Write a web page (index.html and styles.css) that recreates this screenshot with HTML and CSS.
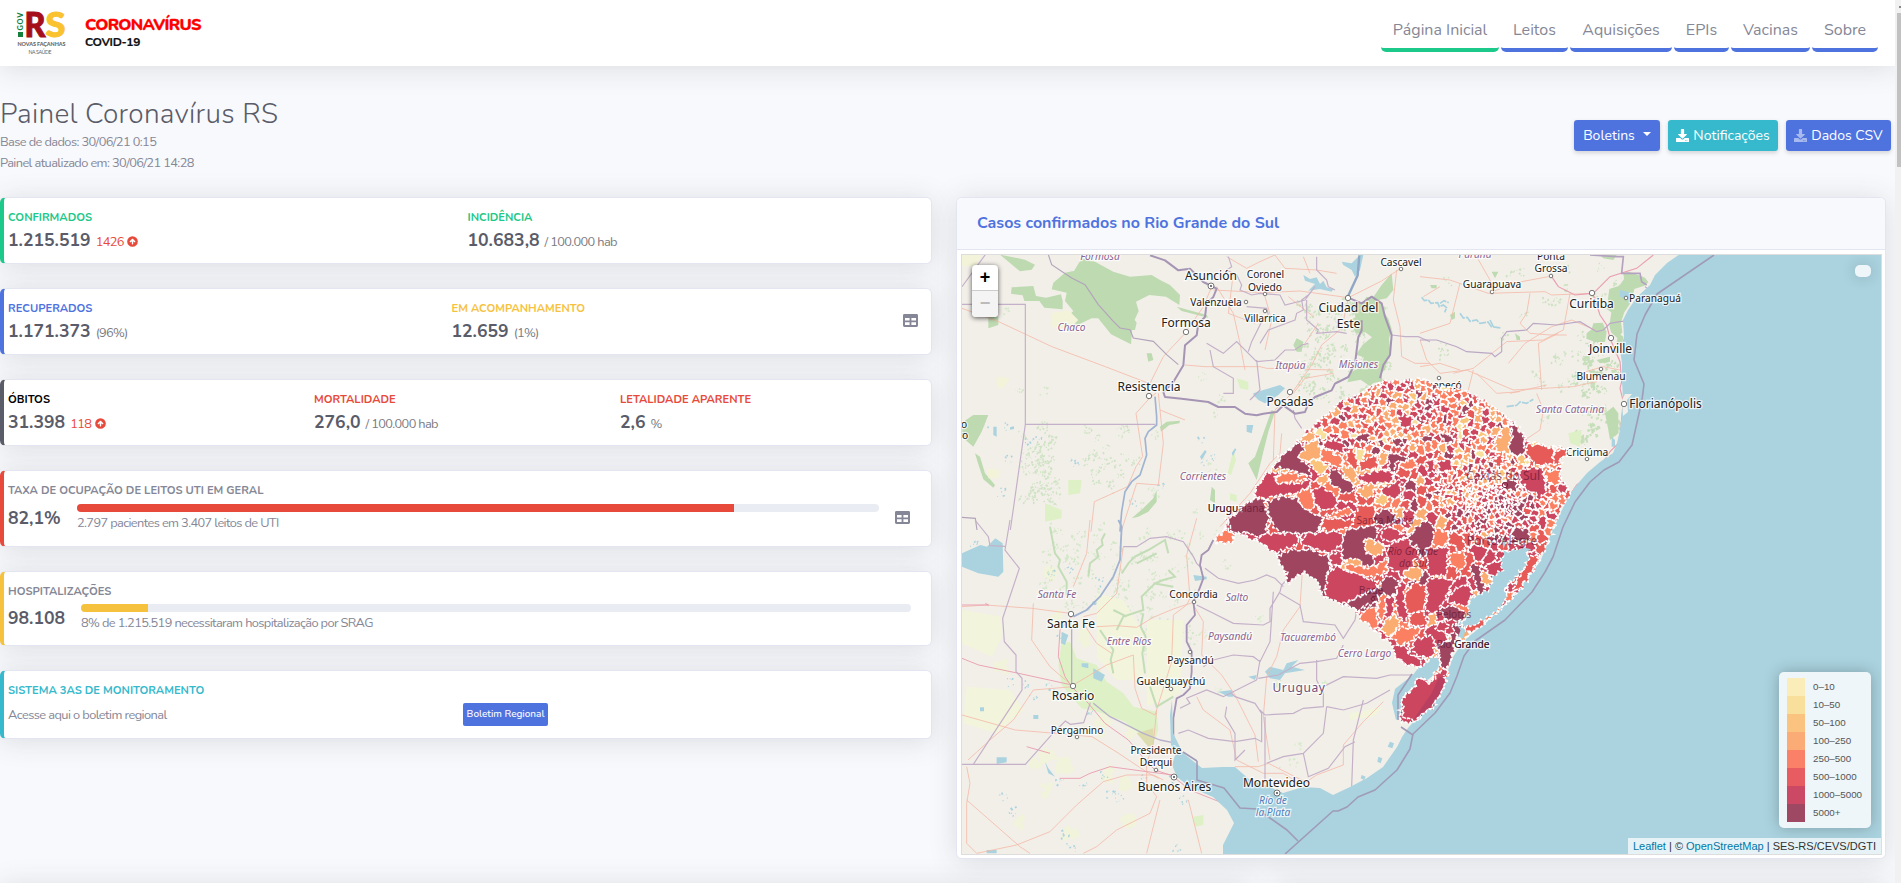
FILE: index.html
```html
<!DOCTYPE html>
<html lang="pt-BR">
<head>
<meta charset="utf-8">
<title>Painel Coronavírus RS</title>
<link rel="stylesheet" href="styles.css">
</head>
<body>
<svg width="0" height="0" class="defs">
  <symbol id="up" viewBox="0 0 512 512"><path fill="currentColor" fill-rule="evenodd" d="M256 8a248 248 0 1 0 0 496a248 248 0 1 0 0-496zM143 289l-15-15c-9-9-9-24 0-33l111-111c9-9 24-9 34 0l111 111c9 9 9 24 0 33l-15 15c-10 9-25 9-35 0l-46-49v136c0 13-11 24-24 24h-16c-13 0-24-11-24-24V240l-46 49c-10 10-25 10-35 0z"/></symbol>
  <symbol id="table" viewBox="0 0 15 13"><path fill="currentColor" fill-rule="evenodd" d="M1.4 0h12.2A1.4 1.4 0 0 1 15 1.4v10.2a1.4 1.4 0 0 1-1.4 1.4H1.4A1.4 1.4 0 0 1 0 11.600V1.400A1.400 1.400 0 0 1 1.400 0zM2 4v2.400h4.600V4zM8.400 4v2.400H13V4zM2 8.300v2.600h4.600V8.300zM8.400 8.300v2.600H13V8.300z"/></symbol>
  <symbol id="down" viewBox="0 0 512 512"><path fill="currentColor" fill-rule="evenodd" d="M216 0h80c13 0 24 11 24 24v168h88c18 0 27 21 14 34L269 378c-7 7-19 7-26 0L90 226c-13-13-4-34 14-34h88V24c0-13 11-24 24-24zm296 376v112c0 13-11 24-24 24H24c-13 0-24-11-24-24V376c0-13 11-24 24-24h147l49 49c20 20 52 20 72 0l49-49h147c13 0 24 11 24 24zm-124 88c0-11-9-20-20-20s-20 9-20 20 9 20 20 20 20-9 20-20zm64 0c0-11-9-20-20-20s-20 9-20 20 9 20 20 20 20-9 20-20z"/></symbol>
</svg>
<div class="viewport">
<div class="page">
  <header class="topbar">
    <div class="brand">
      <svg class="rs-logo" width="50" height="46" viewBox="0 0 50 46">
        <text class="gov" transform="translate(6 20.500) rotate(-90)" textLength="18">GOV</text>
        <rect x="1" y="22" width="5" height="5" fill="#15803c"/>
        <text class="rs" x="7.500" y="27" fill="#a50f1c" stroke="#a50f1c" textLength="21" lengthAdjust="spacingAndGlyphs">R</text>
        <text class="rs" x="28.500" y="27" fill="#f9c22e" stroke="#f9c22e" textLength="20" lengthAdjust="spacingAndGlyphs">S</text>
        <text class="tag" x="0.500" y="36" textLength="48">NOVAS FAÇANHAS</text>
        <text class="tag thin" x="11.500" y="43.500" textLength="23">NA SAÚDE</text>
      </svg>
      <div class="brand-text"><b>CORONAVÍRUS</b><span>COVID-19</span></div>
    </div>
    <nav class="menu">
      <a class="w1 active">Página Inicial</a><a class="w2">Leitos</a><a class="w3">Aquisições</a><a class="w4">EPIs</a><a class="w5">Vacinas</a><a class="w6">Sobre</a>
    </nav>
  </header>

  <section class="heading">
    <div class="heading-text">
      <h1>Painel Coronavírus RS</h1>
      <p>Base de dados: 30/06/21 0:15</p>
      <p>Painel atualizado em: 30/06/21 14:28</p>
    </div>
    <div class="actions">
      <a class="btn b1">Boletins<i class="caret"></i></a>
      <a class="btn b2"><svg width="13" height="13"><use href="#down"/></svg>Notificações</a>
      <a class="btn b3"><svg width="13" height="13" class="dim"><use href="#down"/></svg>Dados CSV</a>
    </div>
  </section>

  <main class="columns">
    <div class="stats">
      <article class="card stat green">
        <div class="cell c-half"><h6 class="t-green">Confirmados</h6><p><b>1.215.519</b><small class="t-red">1426 <svg width="11" height="11"><use href="#up"/></svg></small></p></div>
        <div class="cell"><h6 class="t-green">Incidência</h6><p><b>10.683,8</b><small>/ 100.000 hab</small></p></div>
      </article>
      <article class="card stat blue">
        <div class="cell c-mid"><h6 class="t-blue">Recuperados</h6><p><b>1.171.373</b><small>(96%)</small></p></div>
        <div class="cell grow"><h6 class="t-yellow">Em acompanhamento</h6><p><b>12.659</b><small>(1%)</small></p></div>
        <svg class="table-ico" width="15" height="13"><use href="#table"/></svg>
      </article>
      <article class="card stat dark">
        <div class="cell c-third"><h6 class="t-black">Óbitos</h6><p><b>31.398</b><small class="t-red">118 <svg width="11" height="11"><use href="#up"/></svg></small></p></div>
        <div class="cell c-third"><h6 class="t-red">Mortalidade</h6><p><b>276,0</b><small>/ 100.000 hab</small></p></div>
        <div class="cell"><h6 class="t-red">Letalidade aparente</h6><p><b>2,6</b><small>%</small></p></div>
      </article>
      <article class="card gauge red">
        <h6>Taxa de ocupação de leitos UTI em geral</h6>
        <div class="gauge-row">
          <b class="g1">82,1%</b>
          <div class="meter m1"><div class="track"><i class="fill-red" style="width:81.9%"></i></div><span>2.797 pacientes em 3.407 leitos de UTI</span></div>
          <svg class="table-ico2" width="15" height="13"><use href="#table"/></svg>
        </div>
      </article>
      <article class="card gauge yellow">
        <h6>Hospitalizações</h6>
        <div class="gauge-row">
          <b class="g2">98.108</b>
          <div class="meter m2"><div class="track"><i class="fill-yellow" style="width:8.1%"></i></div><span>8% de 1.215.519 necessitaram hospitalização por SRAG</span></div>
        </div>
      </article>
      <article class="card gauge cyan">
        <h6 class="t-cyan">Sistema 3As de Monitoramento</h6>
        <div class="report"><span>Acesse aqui o boletim regional</span><a class="mini">Boletim Regional</a></div>
      </article>
    </div>

    <article class="card map-card">
      <h2>Casos confirmados no Rio Grande do Sul</h2>
      <div class="map">
<svg class="tiles" viewBox="962 255 919 599" width="919" height="599">
  <rect x="962" y="255" width="919" height="599" fill="#f2efe9"/>
  <g id="specks"></g>
  <!-- north-west -->
  <g transform="translate(950 190) scale(.33333)">
    <g fill="#bddab1">
      <path d="M150 194l75 15 30 15-10 15-35 5-30-25zM345 248l25-5 20 20 35 5 10 35 30 0 20 40 60 35 15 20-5 22-50 0-30-35-50 0-60 28-15-30 20-20-25-30 5-25-45-10 5-20zM395 205l40 10 55 30 50 15 65-5 25 15 30 15 30 30-2 30-40-25-50-5-40 20 8 28-18 40-5 60-60-30-60-75-20-60-30-20-10-20zM185 292l65-4 8 30 30 5 45-10 5 20 0 25-55-5-15-20-45 0-5-17-35-5zM115 380l30 0 0 25-30 10zM1325 250l5 50-20 25-50 10 35-50zM1200 345l20-12 18 5 12-18 24 8 18 6 8 30 15 22 10 30-8 30 4 40-10 25-5 28-12 10 4 25-28 5-10 10-28-20-40 8 10-30 30-15 10-30-24-8 20-30 28-22-20-15-28 4-20-40 20-10z"/>
      <path d="M70 675l45 0-20 50-25 45-35-30 5-45zM1040 445l20 10-5 30-15 0-10-20zM590 490l15 0 5 20-15 5zM965 660l10 5-20 60-15 60-20 85-25-50 20-20 25-70zM630 710l20-15 40-3-2 8-30 5-25 20zM75 790l15 10 15 50 30 35-5 8-30-25-15-45zM785 890l10 10 0 40-15-10z"/>
      <path d="M620 900l0 35-25 30-30 15-20 5 35-30 30-30zM900 950l15 0 5 40-30 15zM680 350l90 25 5 8-80-20z"/>
    </g>
    <g fill="#def0c5"><path d="M860 565l35 10 0 25-25-5zM850 780l8 30-15 45-10-5zM355 870l40 0-5 40-35 5zM285 940l50 20 0 25-50 10zM840 910l20 5 0 20-20-5z"/></g>
    <g fill="#f2f3d9"><path d="M36 194l60 0-20 35-40 0zM305 370l50-10 30 30-30 30-50-10zM110 835l40 5-5 25-30 0zM140 560l40 5-20 30-20-5z"/></g>
    <g fill="#aad3df"><path d="M910 610l30-10 50-15 15 10-20 20-40 25-20-10-15-15zM1060 255l20 12 20-5 10 20 10-10 10 20 20 5-5 8-35-8-35 5 20-20-30-10zM1175 215l30 5 25-25 10 0-10 45-15 20-10-20-25-15zM890 705l20 0-5 25-15-5zM130 710l10 0 0 30-10-5zM750 800l15-20 5 5-15 25zM845 790l10-15 4 3-10 20zM180 712l12-3 0 8-12 2z"/></g>
    <g fill="none" stroke="#f4baaa" stroke-width="2.500">
      <path d="M36 355l110 40 160 75 160 60 130 50M618 610l-15 10-45 50 20 130-20 30-25 60-100 45-10 90M625 610l15 150-15 125-65-5-45 140M600 580l40-80 65-70 55-80 25-60M705 525l60 5 165 0 20 5 200 5M790 300l150 8 110-5 145 20 100-50 60-40M800 290l50 80 20 90 15 80M1195 325l-20 90-60 50-30 60-60 85-50 50-5 150M830 200l60 35 40-20 45-20 30 40 95 5 60 10M945 320l20 70-20 90M1340 240l-10 90 20 80 5 90 40 20 45 0M995 730l-5 60-30 30-60 90-90 100M1030 610l35-45 85-15M630 660l75 30M1105 400l-40 60M850 250l-15 120 80 30M1015 320l75 60M1060 200l20 50"/>
    </g>
    <g fill="none" stroke="#c4b0c8" stroke-width="3.500">
      <path d="M36 343h190v360h390M226 703l-45 317M36 290l70-96"/>
      <path d="M295 194l10 30 60 40 40 20 40 60 45 50 20 20 30 5 10 25 60 10 40 40 35 30M36 982l40 3 5 35" stroke="#b3a4bb"/>
      <path d="M835 200l10 30-15 10 30 15 15 30-5 15 35 15 25-5 60 5 15 30 60-15 30-40-20 25-20 15 5 30-20 10-5 20-80 30-25 40M895 485l10-30 30-60 20-20-5-20-60-5M770 460l50 30 40-35 30 30 30 30 55-5 30-30 30 0 20-15 20-5M1100 200l0 40 30 30 5 20 20 10M1070 330l0 60 35 30-5 10 60-5 30 5M920 510l10 90-30 30M1030 660l5 25 20 30M780 480l10 50 60 35 0 45-30 0M1325 435l40 5 40 0 35 15"/>
    </g>
    <g fill="none" stroke="#a594b4" stroke-width="6" stroke-linejoin="round">
      <path d="M600 196l45 15 40 30 35-5 40 40 40 20-10 25-20 20-5 40-20 20-5 35-35 30-5 60-30 50-30 30 5 15 50 5 80 10 30 15 50 0 30 20 35 5 20-5 40-5 20-20 35 25 30-5 10-25 20-20 50-20 10-20 40-20 20-40 10-80 10-20 0-30"/><path d="M1200 325l35 15 30-20 30 20 10 40 20 55-5 60-20 30-10 40" />
      <path d="M615 620l5 60 0 25-25 20-10 20 5 50-20 60-25 20-20 30-10 60-5 60" stroke-width="5" stroke="#a0b3d0"/>
    </g>
    <path d="M1228 196l-5 60-30 65" fill="none" stroke="#8fa7c4" stroke-width="7"/>
  </g>
  <!-- south-west -->
  <g transform="translate(950 520) scale(.33333)">
    <g fill="#def0c5"><path d="M335 370l25-5 20 50 60 20 30 50 50 35 30 40 70 15 5 55-10 30-30-5-60-50-80-30-50-10-60-70-10-60z"/><path d="M730 890l30-5 0 30-25 5z"/></g>
    <path d="M560 640l50-15 0 50-15 5z" fill="#dcdcae"/>
    <g fill="#f3f4dc"><path d="M36 270l120 20 0 60-30 60-90-40zM440 220l80 20 60 100 0 140-80 0-60-70zM50 500l130 10 40 60-80 70-100-30zM590 300l110 0-10 220-100 40zM1200 580l100-20-30 30-70 10z"/></g>
    <g fill="none" stroke="#c3ddb7" stroke-width="6">
      <path d="M465 40l-10 20 3 15-18 15 5 20-25 20-5 40M300 20l15 80 15 20-5 20 25 45 0 40M515 160l20-30 20-20 40-20 50-30 10 40M655 150l20 20-35 10-25 10-25 25-15 15 5 40-60 20-20 40M580 280l-8 40 15 30-10 50 8 60M610 190l60 10M560 130l60-30M450 330l40 60-8 30 8 40M600 500l20 60 50-30M530 290l-40-20"/>
    </g>
    <g fill="#aad3df"><path d="M36 100l55-25 20 5 25-25 22 15 2 85-15 15-60-10-49-20zM945 455l15-15 40 10 10-20 35-10-20 20 40 10-60 10-15 20-30-5zM805 515l40-5 5 20-15 0zM895 470l25-5-5 15zM430 445l35 20-10 20-25-10zM395 430l20 0 0 15-20-5zM335 335l20 10-10 30-12-5zM140 712l30 0 0 15-30 5zM285 725l10 20 20 25-20-10zM110 990l30 0 0 10-30 0zM1320 665l12 5-5 15-14-5zM1285 710l12 5-5 15-10-5zM1235 765l12 5-5 10-10-5zM90 562l12 0 0 12-12 0zM250 585l15 0 0 12-15 0zM730 165l40 5 0 8-35 5z"/></g>
    <g fill="none" stroke="#f4baaa" stroke-width="2.500">
      <path d="M36 260l70-5 140 10 115 15M250 250l-5 110 55 80 70 60-120 10-60 90-70 60-66 60M36 585l160 45 120 10 110 10 80 50 90 60 30 15M370 495l100-60 80-30 5 100 20 60 40 20 50-160 5-140 40-30 10-20-10-130 30-110M370 200l40-100 10-100M440 320l60-3 60 5 50-30 60-25 60-20M400 310l40 60 45 30M520 80l-20 140-60 60-40 10M730 255l30 50-5 100 60 60 40 60 30 60 30 60 10 80M740 530l20 40 80 60 20 90 40 20 40 20 60 0 40 25M1060 110l-10 150-50 70-20 80-30 60-10 120 20 130M1300 545l-60 60-60 70 0 60-80 30-30 20M50 740l10 50-10 60 0 120 30 30M50 840l160 140 30 20M80 1000l120-25 100-40 80-80 80-70 70-20 80 0 30 15M620 570l-10 100-20 60 0 60 30 40-20 50-100 50-60 50-40 20M630 840l-20 80-20 80M715 840l20 80 20 80M855 740l70 0 30-10 40 20 80 40"/>
    </g>
    <path d="M36 415l50 20 120 25 160 35M365 290l-35 40-5 80 20 60 20 30 50 50 50 60 70 50 50 60 30 30 60 20M36 255l80 0-10-5M230 680l70 20M330 775l60 0 30-15 60-20 110 15 80 10M670 770l50 40 100 40" fill="none" stroke="#ea9eb0" stroke-width="2.800"/>
    <g fill="none" stroke="#c4b0c8" stroke-width="3.500">
      <path d="M180 0l-15 90 43 55-50 150 5 70 35 40 0 50 18 20 0 35L70 733M36 733h190l80-90 40-40 15 10 40-5 20-60M75 0l40 50 5 27 45 2"/>
      <path d="M520 80l40 0 40-25 50-5 50 15 20 30 10 15 10 20 15 15M765 145l40 30 60 15 50-10 35-15 25 10 25 25M740 255l50 25 60 30 90 5 20-10 0-40 30-50 5-20 15-15M990 220l60 35 10 50 95 10 25 40 35-55 5-30M760 440l30-20 60-15 60 5 20 15 30-60 10-150M930 420l-10 60M925 475l60-10 65-35 50-5 60-10 20-40M690 565l30-15-10-15 60-25 50 20 80-40 20-10M685 640l30-10 60 25 80 10 60-10 20 10 0-85-20-30-60-20-10-10M830 560l-5 30 30 50 0 80 30-30M930 570l15 15 85-5 30-15 60-5 0-60 60-30 100 5 40-10 70 0M945 590l0 200M1130 560l50 10 70-20 70-40M1130 560l-10 80-60 60-60 10-50 20M1060 700l15 70 60-25 50-65 30-15M1205 800l5-140 30-120M1100 420l0 60 15 30"/>
    </g>
    <g fill="none" stroke="#a594b4" stroke-width="5.500" stroke-linejoin="round">
      <path d="M790 60l-15 30-20 15-5 30 10 40-15 40-15 30 5 40-25 30 0 50 15 30 0 60-5 50-20 20-20 10-10 60 0 70 15 30 50 50 5 45"/>
      <path d="M505 0l10 20-5 100-20 50-40 60-40 40-40 20" stroke="#a0b3d0"/>
      <path d="M365 320l0 180M430 550l50 40 60 30 40 20 50 20 50 10" stroke="#b7b0c8" stroke-width="4"/>
    </g>
  </g>
  <!-- north-east -->
  <g transform="translate(1420 240) scale(.33333)">
    <path d="M610 100l15-5 30 10 20 8 10 14-12 10-30 10-10 40-20 30-10 30 4 30-14 18-20-18-5-20 6-40-14-10 8-60 30-10 14-20zM500 280l15-12 5-18 28-2 12 28-5 30-30 0-26-10zM595 280l15 10-5 30-15-15zM555 520l25-20 15 20 0 60-25 20-5-30zM505 390l50 10 0 10-40 0zM530 360l40-10 0 15-30 5zM215 95l20 0-10 20zM30 135l20 0 0 10-15 0zM90 225l15-10 0 20-10 5zM285 280l15 10 0 10-10 0zM540 45l50 0-10 15-30-5z" fill="#bddab1"/>
    <path d="M445 580l40-10-5 50-30-10z" fill="#def0c5"/>
    <g fill="none" stroke="#aad3df" stroke-width="5"><path d="M5 172l8 10 12-2 8 10 20-2 5 12 12-5 10 8-6 14M60 190l12-8 14 6M120 220l10 14 12-2 8 12 20-4 10 10 24-4 10 14 30 4M210 240l10 20M260 500l30-4 10-10 20 4 20-12" stroke-dasharray="22 3"/></g>
    <path d="M600 150l40 10-10 20-30-10zM575 590l10 10 0 20-10 0z" fill="#aad3df"/>
    <g fill="none" stroke="#f4baaa" stroke-width="2.500">
      <path d="M0 110l90 10 115 40 170-5 20 10 120-5M170 50l40 70 15 35M215 155l90-30 80-15M450 160l-20 110-60 30-110 5-100 80-60 15M330 160l-10 60-20 30 30 30 60 5 50 0M525 270l-70-30-60 20-80 50-50 60M0 300l20 60 40 40 80-10 140 60 180-10 70-15M0 380l60-10 60 20M160 390l-15 60M170 400l60 60 70-5M365 450l-10-140 60-30M350 460l20 50-10 60-60 40M270 460l110-25M10 170l50-30M120 130l-30 120-90 30M600 390l-50-10-70 20"/>
    </g>
    <path d="M700 45l-50 40-80 25-50 50M395 110l20 30 50 25 50-5M520 165l20 60 20 30 10 40 30 70 5 60-5 20 10 40-5 50-5 70-30 30-40 60-60 40-40 60" fill="none" stroke="#ea9eb0" stroke-width="3.500"/>
    <path d="M0 300l50 0 60 20 30 15 75 5 10 10 20-15 0-40 15-20 60-5 20-20 70 5 70-10 50 30 20-5 20-20 30-5 45-5 75 25M455 760l25 12M675 140l30 25" fill="none" stroke="#bba8c5" stroke-width="3.500"/>
    <path d="M510 45l80 5 20 0-5 50 40 0 15 0 5 25 15 10" fill="none" stroke="#b5a2c0" stroke-width="5"/>
  </g>
  <!-- ocean, estuary and border lagoon -->
  <path fill="#aad3df" d="M1680 254L1667 263L1655 275L1650 285L1637 297L1628 310L1623 320L1624 337L1620 350L1622 363L1622 380L1623 400L1622 413L1620 430L1617 443L1613 453L1600 462L1587 473L1575 487L1568 497L1562 510L1553 527L1548 543L1540 562L1528 577L1517 593L1500 610L1483 625L1467 638L1461 645L1453 657L1447 673L1440 693L1430 707L1420 715L1408 728L1402 737L1397 747L1383 767L1367 778L1350 787L1333 795L1320 788L1303 787L1283 793L1270 787L1250 780L1235 767L1223 767L1202 768L1193 761L1183 753L1178 743L1173 733L1172 700L1170 715L1171 745L1176 752L1172 765L1177 777L1190 787L1213 797L1227 810L1234 823L1227 837L1223 845L1223 854L1881 854L1881 255Z"/>
  <path fill="#aad3df" d="M1413 675L1424 660L1432 655L1440 659L1438 672L1422 684L1415 685L1404 695L1402 715L1396 720L1392 703L1395 689L1405 681Z"/>
  <path d="M1622 400l3-6 7 0-5 6 1 12-5 4z" fill="#f2efe9"/>
  <g fill="none" stroke="#9f9bb8" stroke-width="1.600" stroke-linejoin="round">
    <path d="M1714 255L1657 294L1645 315L1637 334L1634 360L1644 384L1642 400L1632 445L1619 462L1604 470L1590 482L1575 502L1563 527L1553 557L1545 572L1532 592L1505 620L1475 641L1464 656L1457 676L1450 693L1435 713L1413 734L1410 749L1397 770L1375 790L1358 797L1347 807L1338 811L1333 811L1285 854"/>
    <path d="M1197 761L1197 780L1224 788L1240 808L1257 809L1287 830L1298 841M1197 761L1183 752M1401 727L1413 735M1412 674L1398 695L1398 720"/>
  </g>
  <g id="labels"></g>
  <!-- municipalities -->
  <g id="cells" transform="translate(1200 370) scale(.33333)"></g>
  <g id="covered"></g>
</svg>
        <div class="zoom"><span>+</span><span class="off">−</span></div>
        <div class="info"></div>
        <div class="legend">
          <div><i class="l1"></i>0–10</div><div><i class="l2"></i>10–50</div><div><i class="l3"></i>50–100</div><div><i class="l4"></i>100–250</div>
          <div><i class="l5"></i>250–500</div><div><i class="l6"></i>500–1000</div><div><i class="l7"></i>1000–5000</div><div><i class="l8"></i>5000+</div>
        </div>
        <div class="attribution"><a>Leaflet</a> | © <a>OpenStreetMap</a> | SES-RS/CEVS/DGTI</div>
      </div>
    </article>
  </main>
  <div class="next-row"><div class="card n1"></div><div class="card n2"></div></div>
</div>
<div class="scrollbar"><i class="arrow"></i><i class="thumb"></i></div>
</div>
<script src="map.js"></script>
</body>
</html>
```
FILE: styles.css
```css
*{box-sizing:border-box}
body{margin:0;background:#f8f9fc;color:#858796;font-family:Nunito,Lato,"Open Sans",sans-serif;font-size:16px;line-height:1.5}
h1,h2,h6,p{margin:0}
.defs{position:absolute}
.viewport{display:flex;width:1901px;height:883px;overflow:hidden}
.page{width:1895px;height:883px;overflow:hidden}
.topbar{display:flex;justify-content:space-between;height:66px;background:#fff;box-shadow:0 2.4px 28px rgba(58,59,69,.15)}
.brand{display:flex;padding:10px 0 0 17px}
.rs-logo{overflow:visible}
.rs-logo text{font-family:Lato,sans-serif}
.rs-logo .gov{font-size:7.5px;font-weight:900;fill:#15803c}
.rs-logo .rs{font-size:35px;font-weight:900;stroke-width:1px}
.rs-logo .tag{font-size:5.4px;font-weight:900;fill:#666}
.rs-logo .thin{font-size:5.2px;font-weight:400}
.brand-text{display:flex;flex-direction:column;margin-left:18px;padding-top:5px}
.brand-text b{color:#fe0000;font-size:16.500px;line-height:19px;font-weight:800;letter-spacing:-.7px;-webkit-text-stroke:.3px #fe0000}
.brand-text span{color:#111;font-size:12px;line-height:15px;font-weight:700;margin-top:1px;letter-spacing:-.35px;-webkit-text-stroke:.2px #111}
.menu{display:flex;gap:2px;padding:12px 17px 0 0}
.menu a{height:40px;border-bottom:4px solid #4e73df;border-radius:5px;text-align:center;line-height:37px}
.menu .active{border-color:#1cc88a}
.w1{width:118px}.w2{width:67px}.w3{width:102px}.w4{width:55px}.w5{width:79px}.w6{width:66px}
.heading{display:flex;justify-content:space-between;height:131px}
.heading-text{padding-top:31px}
h1{font-size:28px;line-height:35px;font-weight:300;color:#5a5c69;letter-spacing:.27px}
.heading p{font-size:12.8px;line-height:21px;letter-spacing:-.6px}
.actions{display:flex;gap:8px;padding:54px 4px 0 0}
.btn{display:flex;align-items:center;justify-content:center;height:31px;border-radius:3.2px;background:#4e73df;color:#fff;font-size:14px;box-shadow:0 2px 4px rgba(58,59,69,.2)}
.btn svg{margin-right:4px}
.dim{opacity:.5}
.b1{width:86px}.b2{width:110px;background:#36b9cc}.b3{width:105px}
.caret{border:4.200px solid transparent;border-top-color:#fff;border-bottom:0;margin-left:8px;margin-top:-3px}
.columns{display:flex;gap:24px;height:662px}
.stats{display:flex;flex-direction:column;gap:24px;width:932px}
.card{background:#fff;border:1px solid #e3e6f0;border-radius:5.600px;box-shadow:0 2.4px 28px rgba(58,59,69,.15)}
.stat,.gauge{border-left-width:4px}
.stat{display:flex;height:67px;padding:11px 0 0 4px;flex-shrink:0}
.green{border-left-color:#1cc88a}.blue{border-left-color:#4e73df}.dark{border-left-color:#5a5c69}
.red{border-left-color:#e74a3b;height:77px}.yellow{border-left-color:#f6c23e;height:75px}.cyan{border-left-color:#36b9cc;height:69px}
h6{font-size:11.200px;line-height:17px;font-weight:700;text-transform:uppercase;color:#858796}
.cell p{display:flex;align-items:baseline;line-height:26px;margin-top:1px;color:#5a5c69}
.cell b,.gauge b{font-size:17.600px;font-weight:700;color:#5a5c69}
small{font-size:12.800px;margin-left:5px;color:#7a7b82;letter-spacing:-.65px}
small svg{vertical-align:-1px;margin-left:1px}
.c-half{width:459.500px}.c-mid{width:443.500px}.c-third{width:306px}.grow{flex:1}
.t-green{color:#1cc88a}.t-blue{color:#4e73df}.t-yellow{color:#f6c23e}.t-red{color:#e74a3b}.t-black{color:#000}.t-cyan{color:#36b9cc}
.table-ico{margin:14px 13px 0 0}
.gauge{padding:11px 0 0 4px;flex-shrink:0}
.gauge-row{display:flex;padding-top:5px}
.gauge-row b{line-height:28px}
.g1{width:69px}.g2{width:73px;margin-top:-1px}
.meter span{display:block;font-size:12.800px;line-height:18px;margin-top:2px;white-space:nowrap;letter-spacing:-.62px}
.m1{width:802px}.m2{width:830px;margin-top:-1px}
.track{height:8px;border-radius:4px;background:#eaecf4;overflow:hidden}
.track i{display:block;height:8px}
.fill-red{background:#e74a3b}.fill-yellow{background:#f6c23e}
.table-ico2{margin:7px 0 0 16px}
.report{display:flex;padding-top:4px;font-size:12.800px;line-height:22px}
.report span{width:455px;padding-top:1px;letter-spacing:-.58px}
.mini{width:85px;height:23px;background:#4e73df;color:#fff;border-radius:2px;font-size:10px;line-height:22px;text-align:center;font-weight:500}
.map-card{width:930px;height:662px;padding:0 4px}
h2{margin:0 -4px;height:52px;padding:0 20px;line-height:51px;background:#f8f9fc;border-bottom:1px solid #e3e6f0;border-radius:5px 5px 0 0;font-size:16px;font-weight:700;color:#4e73df}
.map{position:relative;width:921px;height:601px;margin-top:4px;border:1px solid #ddd;overflow:hidden}
.tiles{display:block}
.zoom{position:absolute;left:10px;top:10px;width:26px;height:52px;border-radius:4px;overflow:hidden;background:#fff;box-shadow:0 1px 5px rgba(0,0,0,.65);font:bold 18px/25px "Liberation Sans",Arial,sans-serif;color:#000;text-align:center}
.zoom span{display:block;height:26px;border-bottom:1px solid #ccc}
.zoom .off{background:#f4f4f4;color:#bbb;border:0}
.info{position:absolute;right:10px;top:10px;width:16px;height:12px;border-radius:5px;background:rgba(255,255,255,.8);box-shadow:0 0 15px rgba(0,0,0,.2)}
.legend{position:absolute;right:10px;bottom:26px;width:92px;height:156px;padding:6px 8px;border-radius:5px;background:rgba(255,255,255,.8);box-shadow:0 0 15px rgba(0,0,0,.25);font:9.8px/18px "Liberation Sans",Arial,sans-serif;color:#555;white-space:nowrap}
.legend div{display:flex;height:18px}
.legend i{width:18px;height:18px;margin-right:8px;flex-shrink:0}
.l1{background:#faedb9}.l2{background:#f8df9b}.l3{background:#fac480}.l4{background:#faab76}.l5{background:#fa8068}.l6{background:#e75c60}.l7{background:#cc4965}.l8{background:#9e4863}
.attribution{position:absolute;right:0;bottom:0;height:16px;padding:0 5px;background:rgba(255,255,255,.7);font:11px/16px "Liberation Sans",Arial,sans-serif;color:#333;white-space:nowrap}
.attribution a{color:#0078a8}
.next-row{display:flex;gap:24px;padding-top:24px}
.next-row .card{height:40px;flex-shrink:0}
.n1{width:1250px}.n2{width:612px}
.scrollbar{width:6px;height:883px;background:#f1f1f1}
.arrow{display:block;width:2px;height:2px;background:#888;margin:6px 0 5px 4px}
.thumb{display:block;height:154px;margin-left:2px;background:#c1c1c1}
.city{font-family:"Noto Sans",sans-serif;fill:#222;stroke:#fff;stroke-opacity:.75;stroke-width:2.400px;paint-order:stroke;text-anchor:middle}
.region{fill:#8a6591;font-style:italic}
.country{fill:#6e4f7a;letter-spacing:.6px}
.water{fill:#4f80bd;font-style:italic}
.under{fill:#5a1230;stroke:none;opacity:.62}
```
FILE: map.js
```js
(function () {
  var NS = 'http://www.w3.org/2000/svg', seed = 7;
  function rnd() { seed = (seed * 16807) % 2147483647; return seed / 2147483647; }
  function add(parent, tag, attrs, text) {
    var e = document.createElementNS(NS, tag);
    for (var k in attrs) e.setAttribute(k, attrs[k]);
    if (text) e.textContent = text;
    parent.appendChild(e);
    return e;
  }

  // vegetation and small lakes: x, y, w, h, count, colour, size; points gather in clusters
  var specks = document.getElementById('specks');
  [[1022,425,35,80,330,'#cfe3c4',1.3],[1085,425,55,65,170,'#cfe3c4',1.3],[1140,420,90,150,70,'#d6e9ca',1.5],
   [1300,300,90,110,650,'#cde2c1',1.6],[1110,530,90,130,380,'#d3e7c8',1.4],[965,560,170,280,120,'#f1f3da',6],
   [1440,260,180,170,210,'#cde2c1',1.5],[1575,340,42,100,260,'#c6dfba',2],[965,260,420,220,70,'#d3e7c8',1.4],
   [1040,520,60,90,200,'#d3e7c8',1.4],
   [970,400,170,150,60,'#aad3df',1.3],[980,770,220,80,90,'#aad3df',1.3],[1160,410,120,120,40,'#aad3df',1.2],
   [1040,570,60,120,50,'#aad3df',1.3],[1200,590,180,180,50,'#d6ebca',1.5],[970,640,140,80,30,'#aad3df',1.2]
  ].forEach(function (r) {
    var d = '', cx = 0, cy = 0;
    for (var i = 0; i < r[4]; i++) {
      if (i % 7 === 0) { cx = r[0] + rnd() * r[2]; cy = r[1] + rnd() * r[3]; }
      var x = cx + (rnd() - .5) * 9, y = cy + (rnd() - .5) * 9, s = r[6] * (.4 + rnd());
      d += 'M' + x.toFixed(1) + ' ' + y.toFixed(1) + 'l' + s.toFixed(1) + ' ' + (-s * rnd()).toFixed(1) + 'l' + (s * rnd() * .6).toFixed(1) + ' ' + s.toFixed(1) + 'l' + (-s).toFixed(1) + ' ' + (s * .5).toFixed(1) + 'z';
    }
    add(specks, 'path', { d: d, fill: r[5] });
  });

  // state outline
  var outline = [45,510,75,475,80,450,125,412,160,385,170,350,200,310,218,295,240,260,290,220,340,165,400,120,418,95,470,75,520,45,550,35,610,32,660,26,720,48,780,60,840,85,880,110,930,150,960,175,985,215,1060,230,1108,238,1080,275,1085,330,1110,365,1080,420,1060,480,1040,530,1000,600,960,660,900,720,840,770,800,800,785,812,768,795,760,840,745,895,730,960,700,1010,650,1050,625,1060,600,1052,605,985,640,960,655,922,690,935,720,890,712,860,690,865,660,895,620,885,580,855,575,825,530,785,470,735,465,720,420,700,370,680,355,635,310,605,260,645,255,600,225,550,170,510,110,490,95,515,50,520];
  var poly = [];
  for (var i = 0; i < outline.length; i += 2) poly.push([outline[i], outline[i + 1]]);
  function inside(x, y) {
    var c = false;
    for (var a = 0, b = poly.length - 1; a < poly.length; b = a++) {
      var p = poly[a], q = poly[b];
      if ((p[1] > y) !== (q[1] > y) && x < (q[0] - p[0]) * (y - p[1]) / (q[1] - p[1]) + p[0]) c = !c;
    }
    return c;
  }
  function gap(x, y) {
    var core = Math.hypot((x - 870) / 1.25, y - 375);
    if (core < 75) return 11.5;
    if (core < 130) return 15;
    if (y < 240 && x > 430) return 17.5;
    if (y < 430 && x > 680) return 21;
    if (y < 440 && x > 560) return 30;
    if (y < 250) return 22;
    if (x > 860 && y < 560) return 28;
    return 58;
  }
  var sites = [];
  for (var t = 0; t < 60000; t++) {
    var x = 30 + rnd() * 1090, y = 15 + rnd() * 1050, g = gap(x, y) * (.8 + rnd() * .45), ok = inside(x, y);
    for (var s = 0; ok && s < sites.length; s++)
      if (Math.hypot(sites[s][0] - x, sites[s][1] - y) < Math.min(g, sites[s][2])) ok = false;
    if (ok) sites.push([x, y, g]);
  }
  function warp(p) {
    var x = p[0], y = p[1];
    return (x + 4 * Math.sin(y * .31 + x * .13) + 2.5 * Math.sin(y * .8 + x * .2)).toFixed(1) + ' ' + (y + 4 * Math.sin(x * .29 - y * .11) + 2.5 * Math.sin(x * .77 + y * .25)).toFixed(1);
  }
  function rough(pts) {
    var out = [];
    pts.forEach(function (p, k) {
      var q = pts[(k + 1) % pts.length], n = Math.max(1, Math.round(Math.hypot(q[0] - p[0], q[1] - p[1]) / 7));
      for (var j = 0; j < n; j++) out.push(warp([p[0] + (q[0] - p[0]) * j / n, p[1] + (q[1] - p[1]) * j / n]));
    });
    return 'M' + out.join('L') + 'Z';
  }
  var C = ['#faeebc', '#f8e09c', '#fac57b', '#fbac70', '#fb8062', '#e65a58', '#cc465f', '#9f455f'];
  function pick(x, y) {
    var r = rnd(), core = Math.hypot(x - 930, y - 420) < 90;
    if (core) return C[r < .3 ? 7 : r < .65 ? 6 : r < .85 ? 5 : 4];
    if (y > 420) return C[r < .1 ? 7 : r < .5 ? 6 : r < .72 ? 5 : r < .9 ? 4 : 3];
    return C[r < .06 ? 7 : r < .31 ? 6 : r < .54 ? 5 : r < .79 ? 4 : r < .94 ? 3 : r < .99 ? 2 : 1];
  }
  var root = document.getElementById('cells');
  var clip = add(root, 'clipPath', { id: 'state' });
  add(clip, 'path', { d: rough(poly) });
  var layer = add(root, 'g', { 'clip-path': 'url(#state)' });
  add(layer, 'path', { d: rough(poly), fill: C[6] });
  function cell(parent, d, fill, w) {
    add(parent, 'path', { d: d, fill: fill, stroke: '#fff', 'stroke-width': w || 5, 'stroke-linejoin': 'round', 'stroke-dasharray': '12 3' });
  }
  sites.forEach(function (a) {
    var R = 130, pts = [[a[0] - R, a[1] - R], [a[0] + R, a[1] - R], [a[0] + R, a[1] + R], [a[0] - R, a[1] + R]];
    sites.forEach(function (b) {
      var dx = b[0] - a[0], dy = b[1] - a[1];
      if (a === b || Math.hypot(dx, dy) > 2 * R) return;
      var m = (b[0] * b[0] - a[0] * a[0] + b[1] * b[1] - a[1] * a[1]) / 2, out = [];
      pts.forEach(function (p, k) {
        var q = pts[(k + 1) % pts.length], u = p[0] * dx + p[1] * dy - m, v = q[0] * dx + q[1] * dy - m;
        if (u <= 0) out.push(p);
        if ((u < 0 && v > 0) || (u > 0 && v < 0)) out.push([p[0] + (q[0] - p[0]) * u / (u - v), p[1] + (q[1] - p[1]) * u / (u - v)]);
      });
      pts = out;
    });
    cell(layer, rough(pts), pick(a[0], a[1]));
  });

  // large municipalities: colour index, outline
  [[7,'80 455 125 415 165 382 195 390 205 440 195 500 140 490 100 488'],[7,'205 395 250 378 290 385 330 425 372 440 355 485 300 492 240 490 205 440'],
   [7,'218 295 245 258 285 222 320 230 300 265 325 290 338 320 300 312 250 295'],[6,'160 380 170 345 200 308 235 305 225 335 300 342 330 325 335 345 290 370 210 380 190 388'],
   [4,'228 325 240 305 320 318 325 325 285 335 230 340'],[3,'295 262 325 215 355 210 365 250 355 270 320 272'],[3,'300 200 345 180 345 205 325 215 295 215'],
   [1,'345 175 365 175 385 200 375 208 350 200'],[4,'362 250 370 235 430 262 430 290 400 290 362 270'],[2,'330 270 355 270 385 290 375 310 345 308'],[3,'355 320 385 310 388 330 370 350 355 340'],
   [6,'370 215 405 205 435 230 430 250 380 238'],[7,'388 330 390 293 412 300 440 330 468 352 460 365 430 368 400 350'],[3,'425 285 470 300 468 330 455 343 435 320'],
   [6,'335 360 365 352 410 375 408 415 370 422 340 395'],[4,'282 372 330 350 345 400 330 422 305 408'],[6,'475 318 540 300 580 310 575 335 520 342 480 335'],[5,'480 280 530 250 535 295 485 300'],
   [5,'440 245 455 235 475 290 470 303 445 285'],[3,'540 250 560 248 562 275 538 288'],[7,'565 250 600 250 625 275 590 275 580 310 565 290'],[6,'540 360 605 330 600 378 585 385 545 370'],
   [3,'468 365 495 342 535 345 510 385 485 380'],[2,'520 392 550 372 568 390 545 408'],[7,'467 205 490 190 512 200 505 215 480 212'],[6,'590 140 615 130 640 150 625 178 600 165'],
   [7,'575 208 605 203 608 218 590 225'],[7,'535 205 548 212 548 235 536 225'],[7,'720 190 760 195 762 215 735 218'],[7,'660 205 690 195 700 210 680 218'],[6,'710 275 755 268 755 305 715 300'],[6,'680 275 700 270 703 305 682 308'],
   [4,'372 438 450 412 462 432 400 445'],[5,'360 475 372 445 465 448 450 470 390 485'],[7,'520 435 555 415 588 430 580 455 550 468 530 460'],
   [6,'168 508 190 492 285 490 300 520 270 535 220 552'],[6,'302 515 320 490 420 482 435 520 390 548 345 540'],[7,'225 560 265 540 330 538 388 560 382 645 378 685 350 640 312 605 262 645 258 605'],
   [7,'425 515 440 480 500 468 535 470 530 505 495 510 498 550 525 565 520 588 490 585 480 572 430 565'],[6,'540 480 620 455 632 470 600 490 630 500 575 515 545 508'],[4,'575 470 595 458 620 475 590 485'],[3,'495 510 515 505 525 520 545 515 558 535 530 560 500 548'],
   [6,'388 552 425 545 430 580 410 588 390 580'],[4,'430 575 490 595 530 590 560 562 562 600 520 625 440 602'],[6,'378 615 410 590 535 635 530 655 465 690 425 702 378 680'],
   [6,'560 590 568 520 640 500 655 560 635 600 610 620'],[7,'628 500 640 482 675 450 705 470 700 520 678 535 670 575 650 530 632 525'],[6,'682 535 745 532 740 620 680 615'],
   [3,'610 605 640 590 645 570 668 600 662 632 612 625'],[7,'440 705 470 680 540 650 548 625 570 618 598 632 590 668 560 680 490 710 465 725'],[4,'472 740 515 710 530 715 538 780 500 765'],
   [4,'535 680 560 672 555 735 540 760 533 735'],[6,'560 685 580 675 583 730 555 745'],[6,'588 670 598 640 620 640 612 690 628 720 620 755 590 740'],
   [5,'620 665 640 640 675 650 680 700 655 735 625 730 610 690'],[6,'680 625 760 625 738 690 705 730 675 725 680 680'],[5,'626 765 632 730 670 722 682 765 650 770'],
   [3,'540 775 578 732 600 750 590 785 560 800'],[4,'570 800 610 770 660 775 640 810 600 825'],[6,'578 828 610 825 635 855 665 865 660 893 620 885 580 855'],[6,'630 845 650 805 695 795 705 830 695 868 655 855'],
   [7,'765 760 790 775 765 835 745 895 725 892 712 830 748 812'],[7,'722 715 760 705 800 735 780 755 735 752'],[3,'684 735 705 730 708 760 685 768'],[6,'708 760 735 750 748 775 730 788 708 780'],
   [6,'738 690 770 650 800 645 822 670 800 705 750 700'],[7,'808 605 820 575 842 590 855 665 838 675 825 625'],[4,'750 550 790 545 800 590 775 605 750 585'],[3,'842 600 875 625 868 650 850 640'],
   [6,'605 985 640 960 655 922 690 940 725 898 742 900 725 970 690 1015 640 1055 610 1040'],[5,'978 220 1060 232 1062 285 1010 285 978 250'],[5,'1062 280 1062 240 1108 238 1078 280'],
   [7,'925 250 940 165 970 190 978 240 955 260'],[3,'905 170 930 160 930 215 925 248 890 245 885 215 905 195'],[6,'960 300 1030 290 1035 370 1020 385 965 345'],
   [7,'905 335 930 325 952 345 945 362 910 355'],[3,'875 175 898 170 895 198 875 195'],[5,'880 265 905 255 910 288 885 285'],
   [4,'1035 305 1075 300 1082 340 1060 345 1040 330'],[2,'950 260 975 250 980 285 958 285'],[5,'940 655 985 560 1020 555 965 660'],[4,'915 700 920 665 945 668 930 700'],
   [7,'932 490 945 472 985 480 988 510 950 515'],[4,'45 510 75 475 100 495 95 518 50 520']
  ].forEach(function (m) {
    var n = m[1].split(' ').map(Number), pts = [];
    for (var k = 0; k < n.length; k += 2) pts.push([n[k], n[k + 1]]);
    cell(layer, rough(pts), C[m[0]], 4.5);
  });
  add(root, 'path', { d: 'M738 915L722 970L690 1012L640 1050L660 1020L695 970L715 925Z', fill: '#b83f60' });
  add(root, 'path', { d: rough(poly), fill: 'none', stroke: '#fff', 'stroke-width': 5, 'stroke-dasharray': '9 5' });
  function lake(pts) { add(root, 'path', { d: rough(pts), fill: '#aad3df', stroke: '#fff', 'stroke-width': 4, 'stroke-dasharray': '9 5' }); }
  lake([[905,560],[925,545],[975,535],[985,560],[975,590],[945,625],[918,650],[915,690],[905,712],[870,735],[830,765],[790,772],[775,762],[805,735],[808,695],[830,675],[865,660],[880,620],[905,600]]);
  add(root, 'path', { d: 'M905 500l12 20-8 20 15 8 50-15 20 5-30 15-50 10zM770 765l12 15-8 20 15 5 8-25z', fill: '#aad3df' });

  // place names: class, x, y, size, text, marker x, y, radius
  var L = document.getElementById('labels'), U = document.getElementById('covered');
  [['',1211,279.5,12,'Asunción',1211,286,3],['',1265.5,278,10.2,'Coronel'],['',1265,290.500,10.2,'Oviedo',1265,294,1.8],['',1216,305.500,10.2,'Valenzuela',1246,302,1.8],
   ['',1265,322,10.2,'Villarrica',1265,311,1.8],['',1186,327,12,'Formosa',1186,332,2.7],['',1348.500,312,12,'Ciudad del',1348,298,2.7],['',1348.500,327.500,12,'Este'],
   ['',1401,265.500,10.2,'Cascavel',1401,269,1.8],['',1149,391,12,'Resistencia',1149,396,2.7],['',1290,406,12,'Posadas',1290,392,2.7],['',1551,260,10.2,'Ponta'],
   ['',1551,272,10.2,'Grossa',1551,276,1.8],['',1492,287.500,10.2,'Guarapuava',1492,292,1.8],['',1591.500,307.500,12,'Curitiba',1592,293,2.7],['',1655,301.500,10.2,'Paranaguá',1626,298,1.8],
   ['',1610.500,353,12,'Joinville',1611,338,2.7],['',1601,380,10.2,'Blumenau',1601,369,1.8],['',1665.500,408,12,'Florianópolis',1624,404,2.7],['',1587,455.500,10.2,'Criciúma',1587,459,1.8],
   ['',1236,511.500,10.2,'Uruguaiana'],['',1193.500,598,10.2,'Concordia',1194,602,1.8],['',1071,628,12,'Santa Fe',1071,614,2.7],['',1190.500,663.500,10.2,'Paysandú',1190,652,1.8],
   ['',1171,685,10.2,'Gualeguaychú',1171,689,1.8],['',1073,699.500,12,'Rosario',1073,686,2.7],['',1077,733.500,10.2,'Pergamino',1077,737,1.8],['',1156,753.500,10.2,'Presidente'],
   ['',1156,765.500,10.2,'Derqui',1156,770,1.8],['',1174.500,791,12,'Buenos Aires',1174,777,3],['',1276.500,787,12,'Montevideo',1277,793,3],['',1463,648,10.2,'Rio Grande'],
   ['region',1100,260,10.2,'Formosa'],['region',1071.500,330.500,10.2,'Chaco'],['region',1290.500,369,10.2,'Itapúa'],['region',1358.500,368,10.2,'Misiones'],['region',1203,480,10.2,'Corrientes'],
   ['region',1570,412.500,10.2,'Santa Catarina'],['region',1057,598,10.2,'Santa Fe'],['region',1237,601,10.2,'Salto'],['region',1129,644.500,10.2,'Entre Ríos'],['region',1230,639.500,10.2,'Paysandú'],
   ['region',1308,641,10.2,'Tacuarembó'],['region',1364.500,657,10.2,'Cerro Largo'],['country',1299,692,12,'Uruguay'],['water',1273,804,10.2,'Río de'],['water',1273,816,10.2,'la Plata'],
   ['region',1475,257.500,10.2,'Paraná'],['',964,428,10.2,'o'],['',963,439,10.2,'ro'],['',1441,389,10.2,'Chapecó',1439,378,1.8],
   ['under',1236,511.500,10.2,'Uruguaiana'],['under',1463,648,10.2,'Rio Grande'],
   ['under',1385,523.500,10.2,'Santa Maria'],['under region',1413,554.500,10.2,'Rio Grande'],['under region',1413,566.500,10.2,'do Sul'],['under',1371,594,10.2,'Bagé',1373,599,1.8],
   ['under',1454,618,10.2,'Pelotas'],['under',1503,480,12,'Caxias do Sul',1505,485,2.7],['under',1502,544.500,12,'Porto Alegre']
  ].forEach(function (p) {
    var under = /under/.test(p[0]), G = under ? U : L;
    if (p[5]) {
      add(G, 'circle', { cx: p[5], cy: p[6], r: p[7], fill: '#fff', 'fill-opacity': under ? 0 : 1, stroke: under ? '#7a1c3c' : '#666', 'stroke-width': .9 });
      if (p[7] === 3) add(G, 'circle', { cx: p[5], cy: p[6], r: 1.1, fill: '#555' });
    }
    add(G, 'text', { 'class': 'city ' + p[0], x: p[1], y: p[2], 'font-size': p[3] }, p[4]);
  });
})();
```
